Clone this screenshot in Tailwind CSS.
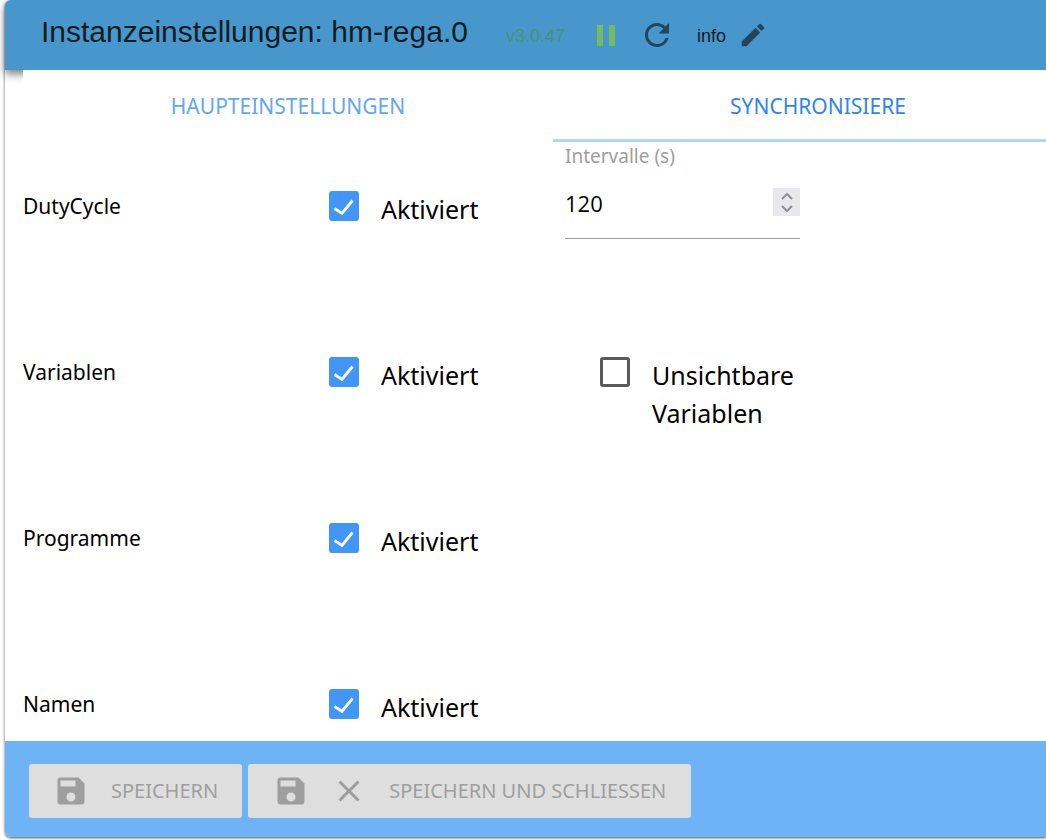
<!DOCTYPE html>
<html lang="de">
<head>
    <meta charset="UTF-8">
    <meta name="viewport" content="width=device-width, initial-scale=1.0">
    <title>Instanzeinstellungen: hm-rega.0</title>
    <script src="https://cdn.jsdelivr.net/npm/@tailwindcss/browser@4"></script>
</head>
<body class="bg-white h-screen overflow-hidden pl-[5px] pb-[3px] font-['Noto_Sans','Open_Sans',sans-serif] text-black">
    <div class="h-full flex flex-col rounded-l-md shadow-[0_1px_3px_rgba(0,0,0,0.7)] bg-white">
        <header class="h-[70px] shrink-0 flex items-center pl-9 bg-[#4797cc] rounded-tl-md shadow-[0_4px_8px_rgba(0,0,0,0.5)] font-['Liberation_Sans',Arial,sans-serif] text-lg text-[#141c22]">
            <h1 class="text-[30px] leading-9 pb-1.5">Instanzeinstellungen: hm-rega.0</h1>
            <span class="ml-[38px] pt-0.5 text-[#43966a]">v3.0.47</span>
            <button type="button" class="ml-8 text-[#75bb62]" aria-label="Pause">
                <svg class="w-[18px] h-[21px]" viewBox="0 0 18 21" fill="currentColor"><path d="M0 0h6v21H0zM12 0h6v21h-6z"></path></svg>
            </button>
            <button type="button" class="ml-6 text-[#26455c]" aria-label="Neu laden">
                <svg class="w-9 h-9" viewBox="0 0 24 24" fill="currentColor"><path d="M17.65 6.35A7.958 7.958 0 0 0 12 4c-4.42 0-7.99 3.58-7.99 8s3.57 8 7.99 8c3.73 0 6.84-2.55 7.73-6h-2.08A5.99 5.99 0 0 1 12 18c-3.31 0-6-2.69-6-6s2.69-6 6-6c1.66 0 3.14.69 4.22 1.78L13 11h7V4l-2.35 2.35z"></path></svg>
            </button>
            <span class="ml-[22px] pt-0.5">info</span>
            <button type="button" class="ml-3 text-[#26455c]" aria-label="Bearbeiten">
                <svg class="w-[30px] h-[30px]" viewBox="0 0 24 24" fill="currentColor"><path d="M3 17.25V21h3.75L17.81 9.94l-3.75-3.75L3 17.25zM20.71 7.04a.996.996 0 0 0 0-1.41l-2.34-2.34a.996.996 0 0 0-1.41 0l-1.83 1.83 3.75 3.75 1.83-1.83z"></path></svg>
            </button>
        </header>

        <main class="flex-1 min-h-0 ml-[18px] overflow-hidden bg-white relative">
            <div class="w-[calc(100%+37px)]">
                <nav class="grid grid-cols-2 h-[72px] text-[21px] text-center">
                    <a href="#main" class="flex items-center justify-center pt-1 text-[#62a8f3] border-b-3 border-transparent">HAUPTEINSTELLUNGEN</a>
                    <a href="#sync" class="flex items-center justify-center pt-1 text-[#2f86ea] border-b-3 border-[#add6fc]">SYNCHRONISIERE</a>
                </nav>

                <div class="grid grid-cols-[minmax(0,306fr)_minmax(0,236fr)_minmax(0,235fr)_minmax(0,283fr)] auto-rows-[166px] text-[25px]">
                    <span class="col-start-1 pt-12 text-[21px] leading-8">DutyCycle</span>
                    <label class="col-start-2 pt-12 flex items-start gap-[22px] leading-[38px]">
                        <span class="grid shrink-0 pt-px">
                            <input type="checkbox" checked class="peer [grid-area:1/1] appearance-none w-[30px] h-[30px] rounded-[3px] border-3 border-[#5a5a5a] checked:border-[#4296f7] checked:bg-[#4296f7]">
                            <svg class="[grid-area:1/1] w-[30px] h-[30px] pointer-events-none invisible peer-checked:visible" viewBox="0 0 30 30" fill="none" stroke="white" stroke-width="2.8"><path d="M5.500 17.500l7.500 5L23.500 9.500"></path></svg>
                        </span>
                        Aktiviert
                    </label>
                    <div class="col-start-3 flex flex-col">
                        <label for="interval" class="text-[19px] leading-[28px] text-[#9e9e9e]">Intervalle (s)</label>
                        <div class="flex items-center justify-between h-[69px] border-b border-[#9e9e9e]">
                            <input id="interval" type="number" value="120" class="[appearance:textfield] min-w-0 flex-1 pb-0.5 font-['Open_Sans',sans-serif] text-[22px] outline-none">
                            <span class="mb-1 w-[27px] h-7 bg-[#e8e7ec] text-[#8f8d9b] flex flex-col items-center justify-center gap-[5px]">
                                <button type="button" class="block" aria-label="Mehr"><svg class="w-3 h-[7px]" viewBox="0 0 12 7" fill="none" stroke="currentColor" stroke-width="2"><path d="M1 6l5-5 5 5"></path></svg></button>
                                <button type="button" class="block" aria-label="Weniger"><svg class="w-3 h-[7px]" viewBox="0 0 12 7" fill="none" stroke="currentColor" stroke-width="2"><path d="M1 1l5 5 5-5"></path></svg></button>
                            </span>
                        </div>
                    </div>

                    <span class="col-start-1 pt-12 text-[21px] leading-8">Variablen</span>
                    <label class="col-start-2 pt-12 flex items-start gap-[22px] leading-[38px]">
                        <span class="grid shrink-0 pt-px">
                            <input type="checkbox" checked class="peer [grid-area:1/1] appearance-none w-[30px] h-[30px] rounded-[3px] border-3 border-[#5a5a5a] checked:border-[#4296f7] checked:bg-[#4296f7]">
                            <svg class="[grid-area:1/1] w-[30px] h-[30px] pointer-events-none invisible peer-checked:visible" viewBox="0 0 30 30" fill="none" stroke="white" stroke-width="2.8"><path d="M5.500 17.500l7.500 5L23.500 9.500"></path></svg>
                        </span>
                        Aktiviert
                    </label>
                    <label class="col-start-3 pt-12 pl-[35px] flex items-start gap-[22px] leading-[38px]">
                        <span class="grid shrink-0 pt-px">
                            <input type="checkbox" class="peer [grid-area:1/1] appearance-none w-[30px] h-[30px] rounded-[3px] border-3 border-[#5a5a5a] checked:border-[#4296f7] checked:bg-[#4296f7]">
                            <svg class="[grid-area:1/1] w-[30px] h-[30px] pointer-events-none invisible peer-checked:visible" viewBox="0 0 30 30" fill="none" stroke="white" stroke-width="2.8"><path d="M5.500 17.500l7.500 5L23.500 9.500"></path></svg>
                        </span>
                        Unsichtbare Variablen
                    </label>

                    <span class="col-start-1 pt-12 text-[21px] leading-8">Programme</span>
                    <label class="col-start-2 pt-12 flex items-start gap-[22px] leading-[38px]">
                        <span class="grid shrink-0 pt-px">
                            <input type="checkbox" checked class="peer [grid-area:1/1] appearance-none w-[30px] h-[30px] rounded-[3px] border-3 border-[#5a5a5a] checked:border-[#4296f7] checked:bg-[#4296f7]">
                            <svg class="[grid-area:1/1] w-[30px] h-[30px] pointer-events-none invisible peer-checked:visible" viewBox="0 0 30 30" fill="none" stroke="white" stroke-width="2.8"><path d="M5.500 17.500l7.500 5L23.500 9.500"></path></svg>
                        </span>
                        Aktiviert
                    </label>

                    <span class="col-start-1 pt-12 text-[21px] leading-8">Namen</span>
                    <label class="col-start-2 pt-12 flex items-start gap-[22px] leading-[38px]">
                        <span class="grid shrink-0 pt-px">
                            <input type="checkbox" checked class="peer [grid-area:1/1] appearance-none w-[30px] h-[30px] rounded-[3px] border-3 border-[#5a5a5a] checked:border-[#4296f7] checked:bg-[#4296f7]">
                            <svg class="[grid-area:1/1] w-[30px] h-[30px] pointer-events-none invisible peer-checked:visible" viewBox="0 0 30 30" fill="none" stroke="white" stroke-width="2.8"><path d="M5.500 17.500l7.500 5L23.500 9.500"></path></svg>
                        </span>
                        Aktiviert
                    </label>
                </div>
            </div>
        </main>

        <footer class="h-24 shrink-0 flex items-start gap-1.5 pt-[23px] pl-6 bg-[#6fb3f7] rounded-bl-md text-xl text-[#9e9e9e]">
            <button type="button" disabled class="h-[54px] flex items-center px-6 bg-[#dedede] rounded-[3px]">
                <svg class="w-9 h-9 mr-[22px]" viewBox="0 0 24 24" fill="currentColor"><path d="M17 3H5a2 2 0 0 0-2 2v14a2 2 0 0 0 2 2h14c1.100 0 2-.9 2-2V7l-4-4zm-5 16c-1.660 0-3-1.340-3-3s1.340-3 3-3 3 1.340 3 3-1.340 3-3 3zm3-10H5V5h10v4z"></path></svg>
                SPEICHERN
            </button>
            <button type="button" disabled class="h-[54px] flex items-center px-[25px] bg-[#dedede] rounded-[3px]">
                <svg class="w-9 h-9 mr-[22px]" viewBox="0 0 24 24" fill="currentColor"><path d="M17 3H5a2 2 0 0 0-2 2v14a2 2 0 0 0 2 2h14c1.100 0 2-.9 2-2V7l-4-4zm-5 16c-1.660 0-3-1.340-3-3s1.340-3 3-3 3 1.340 3 3-1.340 3-3 3zm3-10H5V5h10v4z"></path></svg>
                <svg class="w-9 h-9 mr-[22px]" viewBox="0 0 24 24" fill="currentColor"><path d="M19 6.410L17.590 5 12 10.590 6.410 5 5 6.410 10.590 12 5 17.590 6.410 19 12 13.410 17.590 19 19 17.590 13.410 12z"></path></svg>
                SPEICHERN UND SCHLIESSEN
            </button>
        </footer>
    </div>
</body>
</html>
